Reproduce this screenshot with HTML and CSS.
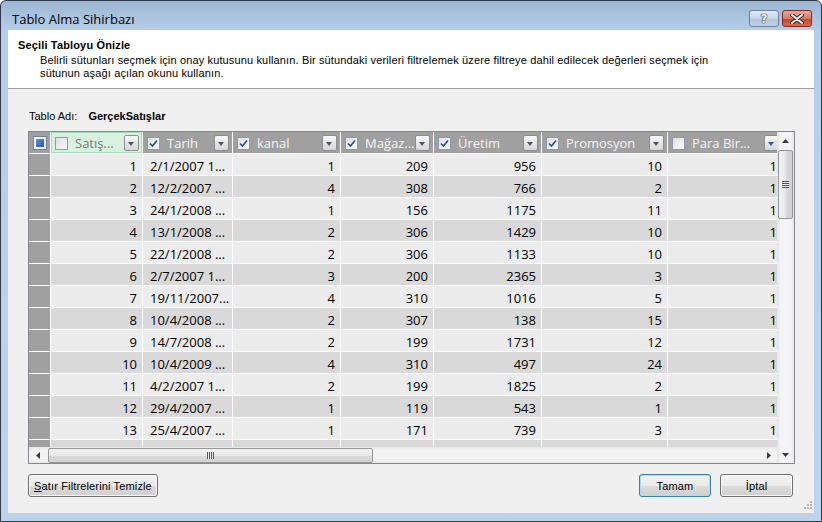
FILE: index.html
```html
<!DOCTYPE html>
<html lang="tr">
<head>
  <meta charset="UTF-8" />
  <title>Tablo Alma Sihirbazı</title>
  <link rel="stylesheet" href="styles.css">
</head>
<body>
<div class="window">
  <div class="titlebar">
    <span class="title">Tablo Alma Sihirbazı</span>
    <div class="caption-buttons">
      <div class="cap-btn help">?</div>
      <div class="cap-btn close">
        <svg width="14" height="10" viewBox="0 0 14 10"><path d="M2 1 L12 9 M12 1 L2 9" stroke="#5a1a12" stroke-width="4" stroke-linecap="round"/><path d="M2 1 L12 9 M12 1 L2 9" stroke="#fff" stroke-width="2" stroke-linecap="round"/></svg>
      </div>
    </div>
  </div>

  <div class="client">
    <div class="page-header">
      <div class="page-title">Seçili Tabloyu Önizle</div>
      <div class="page-desc">Belirli sütunları seçmek için onay kutusunu kullanın. Bir sütundaki verileri filtrelemek üzere filtreye dahil edilecek değerleri seçmek için<br>sütunun aşağı açılan okunu kullanın.</div>
    </div>

    <div class="content">
      <div class="table-name">Tablo Adı: <b>GerçekSatışlar</b></div>

      <div class="grid">
        <div class="viewport">
          <div class="row head">
            <div class="cell c0 corner"><span class="cb indet"></span></div>
            <div class="cell c1 hcell selected"><span class="cb"></span><span class="hlabel">Satış...</span><span class="dd"></span></div>
            <div class="cell c2 hcell"><span class="cb on"><svg width="11" height="11" viewBox="0 0 11 11"><path d="M2 5.5 L4.5 8 L9 2.5" fill="none" stroke="#2b4a86" stroke-width="1.6"/></svg></span><span class="hlabel">Tarih</span><span class="dd"></span></div>
            <div class="cell c3 hcell"><span class="cb on"><svg width="11" height="11" viewBox="0 0 11 11"><path d="M2 5.5 L4.5 8 L9 2.5" fill="none" stroke="#2b4a86" stroke-width="1.6"/></svg></span><span class="hlabel">kanal</span><span class="dd"></span></div>
            <div class="cell c4 hcell"><span class="cb on"><svg width="11" height="11" viewBox="0 0 11 11"><path d="M2 5.5 L4.5 8 L9 2.5" fill="none" stroke="#2b4a86" stroke-width="1.6"/></svg></span><span class="hlabel">Mağaz...</span><span class="dd"></span></div>
            <div class="cell c5 hcell"><span class="cb on"><svg width="11" height="11" viewBox="0 0 11 11"><path d="M2 5.5 L4.5 8 L9 2.5" fill="none" stroke="#2b4a86" stroke-width="1.6"/></svg></span><span class="hlabel">Üretim</span><span class="dd"></span></div>
            <div class="cell c6 hcell"><span class="cb on"><svg width="11" height="11" viewBox="0 0 11 11"><path d="M2 5.5 L4.5 8 L9 2.5" fill="none" stroke="#2b4a86" stroke-width="1.6"/></svg></span><span class="hlabel">Promosyon</span><span class="dd"></span></div>
            <div class="cell c7 hcell"><span class="cb"></span><span class="hlabel">Para Bir...</span><span class="dd hot"></span></div>
          </div>

          <div class="row odd"><div class="cell c0 rh"></div><div class="cell c1 num">1</div><div class="cell c2">2/1/2007 1...</div><div class="cell c3 num">1</div><div class="cell c4 num">209</div><div class="cell c5 num">956</div><div class="cell c6 num">10</div><div class="cell c7 num">1</div></div>
          <div class="row even"><div class="cell c0 rh"></div><div class="cell c1 num">2</div><div class="cell c2">12/2/2007 ...</div><div class="cell c3 num">4</div><div class="cell c4 num">308</div><div class="cell c5 num">766</div><div class="cell c6 num">2</div><div class="cell c7 num">1</div></div>
          <div class="row odd"><div class="cell c0 rh"></div><div class="cell c1 num">3</div><div class="cell c2">24/1/2008 ...</div><div class="cell c3 num">1</div><div class="cell c4 num">156</div><div class="cell c5 num">1175</div><div class="cell c6 num">11</div><div class="cell c7 num">1</div></div>
          <div class="row even"><div class="cell c0 rh"></div><div class="cell c1 num">4</div><div class="cell c2">13/1/2008 ...</div><div class="cell c3 num">2</div><div class="cell c4 num">306</div><div class="cell c5 num">1429</div><div class="cell c6 num">10</div><div class="cell c7 num">1</div></div>
          <div class="row odd"><div class="cell c0 rh"></div><div class="cell c1 num">5</div><div class="cell c2">22/1/2008 ...</div><div class="cell c3 num">2</div><div class="cell c4 num">306</div><div class="cell c5 num">1133</div><div class="cell c6 num">10</div><div class="cell c7 num">1</div></div>
          <div class="row even"><div class="cell c0 rh"></div><div class="cell c1 num">6</div><div class="cell c2">2/7/2007 1...</div><div class="cell c3 num">3</div><div class="cell c4 num">200</div><div class="cell c5 num">2365</div><div class="cell c6 num">3</div><div class="cell c7 num">1</div></div>
          <div class="row odd"><div class="cell c0 rh"></div><div class="cell c1 num">7</div><div class="cell c2">19/11/2007...</div><div class="cell c3 num">4</div><div class="cell c4 num">310</div><div class="cell c5 num">1016</div><div class="cell c6 num">5</div><div class="cell c7 num">1</div></div>
          <div class="row even"><div class="cell c0 rh"></div><div class="cell c1 num">8</div><div class="cell c2">10/4/2008 ...</div><div class="cell c3 num">2</div><div class="cell c4 num">307</div><div class="cell c5 num">138</div><div class="cell c6 num">15</div><div class="cell c7 num">1</div></div>
          <div class="row odd"><div class="cell c0 rh"></div><div class="cell c1 num">9</div><div class="cell c2">14/7/2008 ...</div><div class="cell c3 num">2</div><div class="cell c4 num">199</div><div class="cell c5 num">1731</div><div class="cell c6 num">12</div><div class="cell c7 num">1</div></div>
          <div class="row even"><div class="cell c0 rh"></div><div class="cell c1 num">10</div><div class="cell c2">10/4/2009 ...</div><div class="cell c3 num">4</div><div class="cell c4 num">310</div><div class="cell c5 num">497</div><div class="cell c6 num">24</div><div class="cell c7 num">1</div></div>
          <div class="row odd"><div class="cell c0 rh"></div><div class="cell c1 num">11</div><div class="cell c2">4/2/2007 1...</div><div class="cell c3 num">2</div><div class="cell c4 num">199</div><div class="cell c5 num">1825</div><div class="cell c6 num">2</div><div class="cell c7 num">1</div></div>
          <div class="row even"><div class="cell c0 rh"></div><div class="cell c1 num">12</div><div class="cell c2">29/4/2007 ...</div><div class="cell c3 num">1</div><div class="cell c4 num">119</div><div class="cell c5 num">543</div><div class="cell c6 num">1</div><div class="cell c7 num">1</div></div>
          <div class="row odd"><div class="cell c0 rh"></div><div class="cell c1 num">13</div><div class="cell c2">25/4/2007 ...</div><div class="cell c3 num">1</div><div class="cell c4 num">171</div><div class="cell c5 num">739</div><div class="cell c6 num">3</div><div class="cell c7 num">1</div></div>
          <div class="row even"><div class="cell c0 rh"></div><div class="cell c1"></div><div class="cell c2"></div><div class="cell c3"></div><div class="cell c4"></div><div class="cell c5"></div><div class="cell c6"></div><div class="cell c7"></div></div>
        </div>

        <div class="vscroll">
          <div class="sb-arrow"><svg width="7" height="4" viewBox="0 0 7 4"><path d="M0 4 L3.5 0 L7 4 Z" fill="#3a3a3a"/></svg></div>
          <div class="vthumb"><span class="grip-lines"></span></div>
          <div class="sb-track"></div>
          <div class="sb-arrow"><svg width="7" height="4" viewBox="0 0 7 4"><path d="M0 0 L7 0 L3.5 4 Z" fill="#3a3a3a"/></svg></div>
        </div>

        <div class="hscroll">
          <div class="sb-arrow h"><svg width="4" height="7" viewBox="0 0 4 7"><path d="M4 0 L4 7 L0 3.5 Z" fill="#3a3a3a"/></svg></div>
          <div class="hthumb"><span class="grip-bars"></span></div>
          <div class="sb-track"></div>
          <div class="sb-arrow h"><svg width="4" height="7" viewBox="0 0 4 7"><path d="M0 0 L4 3.5 L0 7 Z" fill="#3a3a3a"/></svg></div>
        </div>
      </div>

      <div class="buttons">
        <button class="btn wide"><u>S</u>atır Filtrelerini Temizle</button>
        <span class="spacer"></span>
        <button class="btn default">Tamam</button>
        <button class="btn">İptal</button>
      </div>
    </div>

    <svg class="size-grip" width="12" height="12" viewBox="0 0 12 12">
      <g fill="#b8b8b8">
        <rect x="9" y="1" width="2" height="2"/>
        <rect x="6" y="4" width="2" height="2"/><rect x="9" y="4" width="2" height="2"/>
        <rect x="3" y="7" width="2" height="2"/><rect x="6" y="7" width="2" height="2"/><rect x="9" y="7" width="2" height="2"/>
      </g>
    </svg>
  </div>
</div>
</body>
</html>
```

FILE: styles.css
```css
* {
  box-sizing: border-box;
}
body {
  margin: 0;
  width: 822px;
  height: 522px;
  overflow: hidden;
  font-family: "Liberation Sans", Arial, sans-serif;
  font-size: 11px;
  color: #000;
  background: #fff;
}
.window {
  width: 822px;
  height: 522px;
  border: 1px solid #2f3b4a;
  border-radius: 6px 6px 0 0;
  background: linear-gradient(#9cb6d3, #b6cee8 30px, #bcd3ec);
  display: flex;
  flex-direction: column;
  padding: 0 7px 8px;
}

/* title bar */
.titlebar {
  height: 29px;
  display: flex;
  justify-content: space-between;
  align-items: flex-start;
}
.title {
  font-family: "Open Sans", sans-serif;
  font-size: 13px;
  padding: 9px 0 0 4px;
  color: #000;
}
.caption-buttons {
  display: flex;
  gap: 3px;
  margin-top: 9px;
  margin-right: 2px;
}
.cap-btn {
  width: 30px;
  height: 17px;
  border-radius: 3px;
  display: flex;
  align-items: center;
  justify-content: center;
}
.help {
  border: 1px solid #6f829b;
  background: linear-gradient(#e3ebf5, #c6d5e8 50%, #b2c6df 51%, #bfd1e6);
  font-family: "DejaVu Sans", sans-serif;
  font-weight: bold;
  font-size: 12px;
  color: #fff;
  text-shadow: 0 0 1px #1d2a3d, 0 0 1px #1d2a3d, 0 0 1px #1d2a3d;
}
.close {
  border: 1px solid #7d2c20;
  background: linear-gradient(#e9a99a, #d77a66 50%, #c54630 51%, #d66a4f);
}

/* client area */
.client {
  flex: 1;
  background: #f0f0f0;
  display: flex;
  flex-direction: column;
  position: relative;
}
.page-header {
  height: 59px;
  background: #fff;
  border-bottom: 1px solid #a0a0a0;
  padding: 9px 0 0 10px;
}
.page-title {
  font-weight: bold;
  line-height: 13px;
  letter-spacing: 0.15px;
}
.page-desc {
  margin-top: 2px;
  padding-left: 22px;
  line-height: 13px;
  letter-spacing: 0.14px;
}
.content {
  flex: 1;
  padding: 21px 19px 0 20px;
  display: flex;
  flex-direction: column;
}
.table-name {
  line-height: 13px;
  padding-left: 1px;
}
.table-name b {
  margin-left: 8px;
}

/* grid */
.grid {
  margin-top: 8px;
  height: 333px;
  border: 1px solid #828790;
  display: grid;
  grid-template-columns: 1fr 17px;
  grid-template-rows: 1fr 16px;
  background: #fff;
}
.viewport {
  overflow: hidden;
  font-family: "Open Sans", sans-serif;
  font-size: 13px;
}
.row {
  display: flex;
  height: 22px;
}
.row.odd {
  background: #ececec;
}
.row.even {
  background: #d9d9d9;
}
.row.head {
  background: #a0a0a0;
}
.cell {
  flex: none;
  height: 22px;
  line-height: 25px;
  border-right: 1px solid #fff;
  border-bottom: 1px solid #fff;
  padding: 0 5px 0 7px;
  white-space: nowrap;
  overflow: hidden;
}
.cell.num {
  text-align: right;
  padding: 0 5px 0 2px;
}
.c0 { width: 22px; }
.c1 { width: 92px; }
.c2 { width: 90px; }
.c3 { width: 108px; }
.c4 { width: 93px; }
.c5 { width: 108px; }
.c6 { width: 126px; }
.c7 { width: 115px; }

.rh,
.corner {
  background: #a0a0a0;
  padding: 0;
}
.corner {
  display: flex;
  align-items: center;
  justify-content: center;
}
.hcell {
  display: flex;
  align-items: center;
  padding: 1px 3px 0 4px;
  line-height: 21px;
  color: #f4f4f4;
}
.hcell.selected {
  background: #d8f1e1;
  box-shadow: inset 0 0 0 1px #a6dbb9;
  color: #7b7b7b;
}
.hlabel {
  flex: 1;
  overflow: hidden;
  margin-left: 7px;
}
.cb {
  flex: none;
  width: 13px;
  height: 13px;
  border: 1px solid #8e9aae;
  background: linear-gradient(135deg, #dcdfe4, #fbfbfb);
  display: flex;
  align-items: center;
  justify-content: center;
}
.cb.indet {
  width: 14px;
  height: 14px;
  border-color: #6f85a8;
  background: #eef2f8;
  padding: 2px;
}
.cb.indet::after {
  content: "";
  width: 8px;
  height: 8px;
  background: linear-gradient(135deg, #6a8fd6, #2f58ad);
}
.dd {
  flex: none;
  width: 15px;
  height: 16px;
  border: 1px solid #8d8d8d;
  border-radius: 2px;
  background: linear-gradient(#fafafa, #e6e6e6 50%, #d6d6d6);
  position: relative;
}
.dd::after {
  content: "";
  position: absolute;
  left: 3px;
  top: 6px;
  border-left: 3.5px solid transparent;
  border-right: 3.5px solid transparent;
  border-top: 4px solid #4b5466;
}
.dd.hot::after {
  border-top-color: #2f56a8;
}

/* scrollbars */
.vscroll {
  grid-row: 1 / span 2;
  grid-column: 2;
  background: linear-gradient(90deg, #e3e3e3, #f4f4f4 20%, #f4f4f4 80%, #e8e8e8);
  display: flex;
  flex-direction: column;
  align-items: center;
}
.hscroll {
  grid-row: 2;
  grid-column: 1;
  background: linear-gradient(#e6e6e6, #f3f3f3 20%, #f3f3f3 80%, #e9e9e9);
  display: flex;
  align-items: center;
}
.sb-arrow {
  flex: none;
  width: 17px;
  height: 17px;
  display: flex;
  align-items: center;
  justify-content: center;
}
.sb-arrow.h {
  width: 17px;
  height: 16px;
}
.sb-track {
  flex: 1;
}
.vthumb {
  flex: none;
  width: 15px;
  height: 69px;
  margin-top: 1px;
  border: 1px solid #979797;
  border-radius: 2px;
  background: linear-gradient(90deg, #f3f3f3, #e9e9e9 50%, #d9d9d9 51%, #d2d2d2);
  display: flex;
  align-items: center;
  justify-content: center;
}
.grip-lines {
  width: 7px;
  height: 7px;
  background: repeating-linear-gradient(#555 0 1px, #eee 1px 2px);
}
.hthumb {
  flex: none;
  width: 325px;
  height: 15px;
  margin-left: 2px;
  border: 1px solid #979797;
  border-radius: 2px;
  background: linear-gradient(#f3f3f3, #e9e9e9 50%, #d9d9d9 51%, #d2d2d2);
  display: flex;
  align-items: center;
  justify-content: center;
}
.grip-bars {
  width: 7px;
  height: 7px;
  background: repeating-linear-gradient(90deg, #555 0 1px, #eee 1px 2px);
}

/* buttons */
.buttons {
  margin-top: 10px;
  display: flex;
  padding-right: 2px;
}
.spacer {
  flex: 1;
}
.btn {
  height: 23px;
  width: 73px;
  margin-left: 9px;
  border: 1px solid #707070;
  border-radius: 3px;
  background: linear-gradient(#f2f2f2, #ebebeb 50%, #dddddd 51%, #cfcfcf);
  box-shadow: inset 0 0 0 1px rgba(255, 255, 255, 0.8);
  font-family: "Liberation Sans", Arial, sans-serif;
  font-size: 11px;
  letter-spacing: 0.14px;
  color: #000;
  padding: 0;
}
.btn.wide {
  width: 130px;
  margin-left: 0;
}
.btn.default {
  width: 72px;
  border-color: #3c7fb1;
  box-shadow: inset 0 0 0 1px #a9dcf6;
}
.size-grip {
  position: absolute;
  right: 1px;
  bottom: 1px;
}
```
